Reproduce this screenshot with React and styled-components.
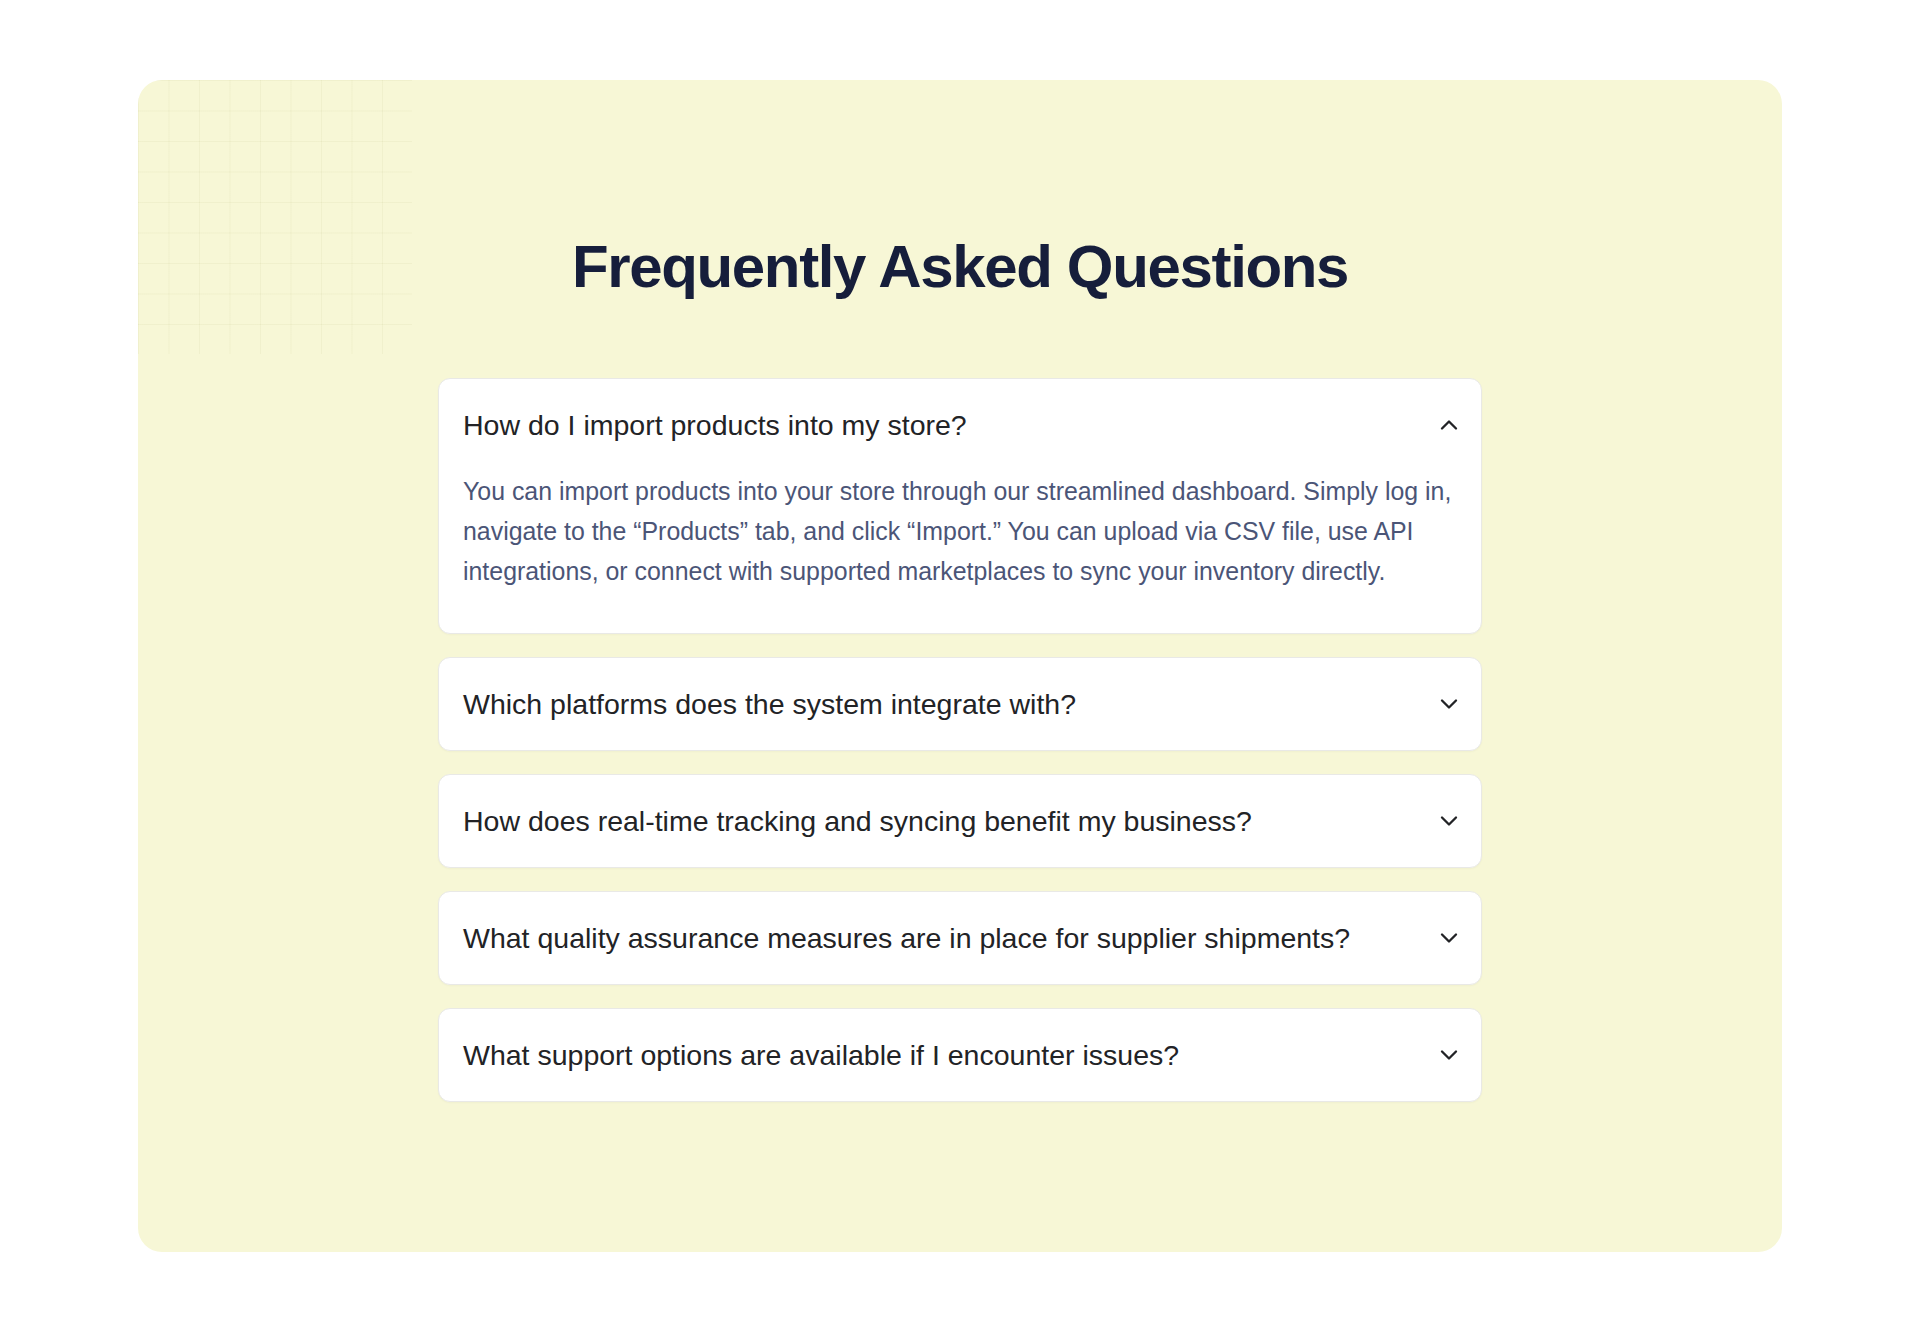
import React, { useState } from 'react';
import styled, { createGlobalStyle } from 'styled-components';
import { ChevronDown, ChevronUp } from 'lucide-react';

const GlobalStyle = createGlobalStyle`
  html, body {
    margin: 0;
    padding: 0;
    background: #ffffff;
  }
  body {
    font-family: "Liberation Sans", Arial, Helvetica, sans-serif;
    -webkit-font-smoothing: antialiased;
  }
  * {
    box-sizing: border-box;
  }
`;

const faqs = [
  {
    q: 'How do I import products into my store?',
    a: 'You can import products into your store through our streamlined dashboard. Simply log in, navigate to the \u201CProducts\u201D tab, and click \u201CImport.\u201D You can upload via CSV file, use API integrations, or connect with supported marketplaces to sync your inventory directly.',
  },
  {
    q: 'Which platforms does the system integrate with?',
    a: 'We integrate with the major e-commerce platforms and marketplaces, so your catalog, orders and inventory stay in sync wherever you sell.',
  },
  {
    q: 'How does real-time tracking and syncing benefit my business?',
    a: 'Real-time syncing keeps stock levels, prices and order statuses accurate across every channel, reducing overselling and manual updates.',
  },
  {
    q: 'What quality assurance measures are in place for supplier shipments?',
    a: 'Suppliers are vetted and shipments are inspected against agreed standards before they are dispatched to your customers.',
  },
  {
    q: 'What support options are available if I encounter issues?',
    a: 'Our support team is available by chat and email, and our help center covers the most common questions step by step.',
  },
];

const Page = styled.main`
  padding: 80px 0 73px;
`;

const Panel = styled.section`
  position: relative;
  max-width: 1644px;
  margin: 0 auto;
  padding: 151px 0 150px;
  border-radius: 24px;
  background: #f7f7d6;
  overflow: hidden;

  /* faint grid in the top-left corner */
  &::before {
    content: '';
    position: absolute;
    top: 0;
    left: 0;
    width: 274px;
    height: 274px;
    background-image:
      linear-gradient(to right, rgba(150, 150, 80, 0.07) 1px, transparent 1px),
      linear-gradient(to bottom, rgba(150, 150, 80, 0.07) 1px, transparent 1px);
    background-size: 30.5px 30.5px;
    pointer-events: none;
  }
`;

const Title = styled.h2`
  position: relative;
  margin: 0 0 75px;
  text-align: center;
  font-size: 60px;
  line-height: 72px;
  font-weight: 700;
  letter-spacing: -1.35px;
  color: #161e3b;
`;

const List = styled.div`
  position: relative;
  width: 1044px;
  margin: 0 auto;
  display: flex;
  flex-direction: column;
  gap: 23px;
`;

const Item = styled.div`
  background: #ffffff;
  border: 1px solid #e9e9e6;
  border-radius: 12px;
  box-shadow: 0 1px 2px rgba(0, 0, 0, 0.03);
`;

const Question = styled.button`
  display: flex;
  align-items: center;
  justify-content: space-between;
  width: 100%;
  padding: 24px 18px 24px 24px;
  border: none;
  background: none;
  cursor: pointer;
  text-align: left;
  font-family: inherit;
  font-size: 28.5px;
  line-height: 44px;
  font-weight: 400;
  color: #222326;

  svg {
    flex-shrink: 0;
    color: #222326;
  }
`;

const Answer = styled.p`
  margin: 0;
  padding: 0 20px 42px 24px;
  font-size: 24.9px;
  line-height: 40px;
  color: #4b5577;
`;

export default function App() {
  const [open, setOpen] = useState(0);

  return (
    <>
      <GlobalStyle />
      <Page>
        <Panel>
          <Title>Frequently Asked Questions</Title>
          <List>
            {faqs.map((item, i) => (
              <Item key={item.q}>
                <Question type="button" onClick={() => setOpen(open === i ? -1 : i)}>
                  <span>{item.q}</span>
                  {open === i
                    ? <ChevronUp size={28} strokeWidth={2} />
                    : <ChevronDown size={28} strokeWidth={2} />}
                </Question>
                {open === i ? <Answer>{item.a}</Answer> : null}
              </Item>
            ))}
          </List>
        </Panel>
      </Page>
    </>
  );
}
